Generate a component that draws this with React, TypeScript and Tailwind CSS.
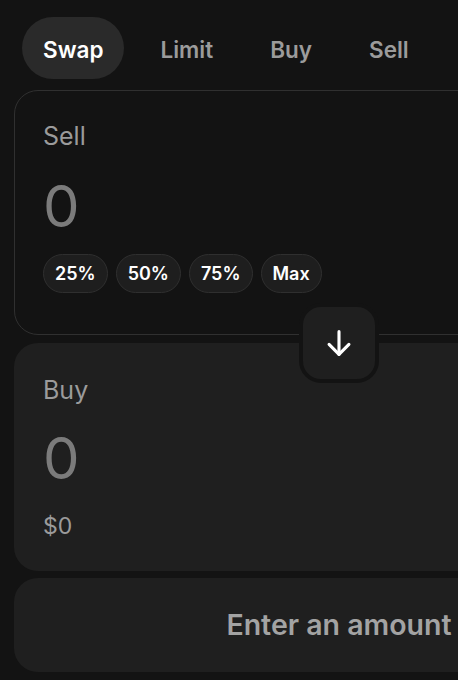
import { useState } from "react";

const tabs = ["Swap", "Limit", "Buy", "Sell"];
const presets = ["25%", "50%", "75%", "Max"];

const ArrowDownIcon = () => (
  <svg
    width="34"
    height="34"
    viewBox="0 0 24 24"
    fill="none"
    stroke="currentColor"
    strokeWidth="2.2"
    strokeLinecap="round"
    strokeLinejoin="round"
  >
    <path d="M12 4v16" />
    <path d="M5 13l7 7 7-7" />
  </svg>
);

export default function App() {
  const [active, setActive] = useState("Swap");

  return (
    <div
      className="h-[680px] w-full overflow-hidden bg-[#131313] text-white"
      style={{ fontFamily: "Inter, 'Noto Sans', sans-serif" }}
    >
      <div className="flex items-center gap-[15px] pl-[22px] pt-[17px]">
        {tabs.map((t) => (
          <button
            key={t}
            onClick={() => setActive(t)}
            className={`h-[62px] rounded-full px-[21px] pt-[4px] text-[22.5px] font-semibold ${
              active === t ? "bg-[#2a2a2a] text-white" : "text-[#9b9b9b]"
            }`}
          >
            {t}
          </button>
        ))}
      </div>

      <div className="ml-[14px] mt-[11px] w-[650px]">
        <div className="relative flex flex-col gap-[8px]">
          {/* sell */}
          <div className="rounded-[24px] border border-[#303030] px-[28px] pt-[31px] pb-[41px]">
            <p className="text-[25px] leading-[28px] text-[#9b9b9b]">Sell</p>
            <p className="mt-[24px] text-[58px] leading-[64px] text-[#7b7b7b]">0</p>
            <div className="mt-[16px] flex gap-[8px]">
              {presets.map((p) => (
                <button
                  key={p}
                  className="h-[39px] rounded-full border border-[#2f2f2f] bg-[#1e1e1e] px-[11px] text-[18px] font-semibold text-white"
                >
                  {p}
                </button>
              ))}
            </div>
          </div>

          {/* buy */}
          <div className="rounded-[24px] bg-[#1f1f1f] px-[29px] pt-[33px] pb-[33px]">
            <p className="text-[25px] leading-[28px] text-[#9b9b9b]">Buy</p>
            <p className="mt-[22px] text-[58px] leading-[64px] text-[#7b7b7b]">0</p>
            <p className="mt-[24px] text-[23px] leading-[24px] text-[#9b9b9b]">$0</p>
          </div>

          <button className="absolute left-1/2 top-[213px] flex h-[80px] w-[80px] -translate-x-1/2 items-center justify-center rounded-[22px] border-4 border-[#131313] bg-[#1f1f1f] text-white">
            <ArrowDownIcon />
          </button>
        </div>

        <button className="mt-[7px] flex h-[94px] w-full items-center justify-center rounded-[24px] bg-[#1f1f1f] text-[28.5px] font-semibold text-[#a3a3a3]">
          Enter an amount
        </button>
      </div>
    </div>
  );
}
